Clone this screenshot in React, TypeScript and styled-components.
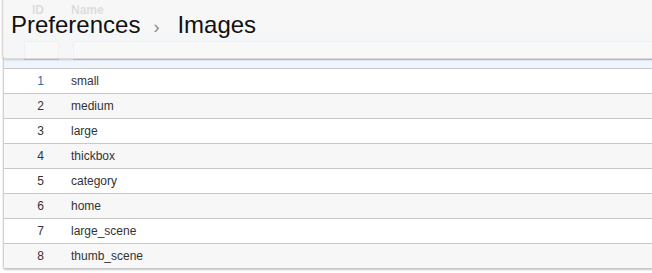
import styled, { createGlobalStyle } from 'styled-components';

const GlobalStyle = createGlobalStyle`
  html, body {
    margin: 0;
    padding: 0;
    background: #fff;
    font-family: "Liberation Sans", Arial, Helvetica, sans-serif;
    overflow: hidden;
  }
`;

const Page = styled.div`
  position: relative;
  width: 652px;
  height: 273px;
  overflow: hidden;
  padding-left: 3px;
  box-sizing: border-box;
`;

const Grid = styled.div`
  width: 680px;
  border-left: 1px solid #d2d2d2;
  box-shadow: 0 1px 2px rgba(0, 0, 0, 0.22);
  border-bottom-left-radius: 3px;
`;

const HeadRow = styled.div`
  display: grid;
  grid-template-columns: 62px 1fr;
  height: 33px;
  background: #fafafa;
  font-size: 12px;
  font-weight: bold;
  color: #666;
`;

const HeadCell = styled.div<{ $align?: 'right' | 'left' }>`
  padding-top: 3px;
  text-align: ${p => (p.$align === 'right' ? 'right' : 'left')};
  padding-right: ${p => (p.$align === 'right' ? '22px' : '0')};
  padding-left: ${p => (p.$align === 'right' ? '0' : '5px')};
`;

const FilterRow = styled.div`
  display: grid;
  grid-template-columns: 62px 1fr;
  height: 36px;
  background: #eef5fd;
  border-bottom: 1px solid #c8c8c8;
  box-sizing: border-box;
`;

const FilterCell = styled.div<{ $offset: number }>`
  padding-top: 8px;
  padding-left: ${p => p.$offset}px;
`;

const FilterInput = styled.div<{ $width?: number }>`
  width: ${p => (p.$width ? `${p.$width}px` : 'auto')};
  height: 19px;
  box-sizing: border-box;
  border: 1px solid #cfcfcf;
  background: #fff;
`;

const Row = styled.div<{ $alt: boolean }>`
  display: grid;
  grid-template-columns: 62px 1fr;
  height: 25px;
  align-items: center;
  box-sizing: border-box;
  border-bottom: 1px solid #c8c8c8;
  background: ${p => (p.$alt ? '#f7f7f7' : '#fff')};
  font-size: 12px;
  color: #333;
`;

const IdCell = styled.div<{ $link: boolean }>`
  text-align: right;
  padding-right: 22px;
  color: ${p => (p.$link ? '#2a6fa8' : '#333')};
`;

const NameCell = styled.div`
  padding-left: 5px;
`;

const Overlay = styled.div`
  position: absolute;
  top: -1px;
  left: 2px;
  right: -10px;
  height: 60px;
  box-sizing: border-box;
  background: rgba(247, 247, 247, 0.82);
  border: 1px solid #dadada;
  border-bottom-left-radius: 4px;
  box-shadow: 0 1px 2px rgba(0, 0, 0, 0.18);
  padding: 13px 0 0 8px;
  display: flex;
  align-items: baseline;
`;

const Crumb = styled.span`
  font-size: 24px;
  line-height: 24px;
  color: #111;
`;

const Separator = styled.span`
  font-size: 18px;
  line-height: 24px;
  color: #8a8a8a;
  margin: 0 18px 0 13px;
`;

const rows = [
  'small',
  'medium',
  'large',
  'thickbox',
  'category',
  'home',
  'large_scene',
  'thumb_scene',
];

export default function App() {
  return (
    <>
      <GlobalStyle />
      <Page>
        <Grid>
          <HeadRow>
            <HeadCell $align="right">ID</HeadCell>
            <HeadCell>Name</HeadCell>
          </HeadRow>
          <FilterRow>
            <FilterCell $offset={20}>
              <FilterInput $width={35} />
            </FilterCell>
            <FilterCell $offset={7}>
              <FilterInput />
            </FilterCell>
          </FilterRow>
          {rows.map((name, i) => (
            <Row key={name} $alt={i % 2 === 1}>
              <IdCell $link={i === 0}>{i + 1}</IdCell>
              <NameCell>{name}</NameCell>
            </Row>
          ))}
        </Grid>
        <Overlay>
          <Crumb>Preferences</Crumb>
          <Separator>›</Separator>
          <Crumb>Images</Crumb>
        </Overlay>
      </Page>
    </>
  );
}
